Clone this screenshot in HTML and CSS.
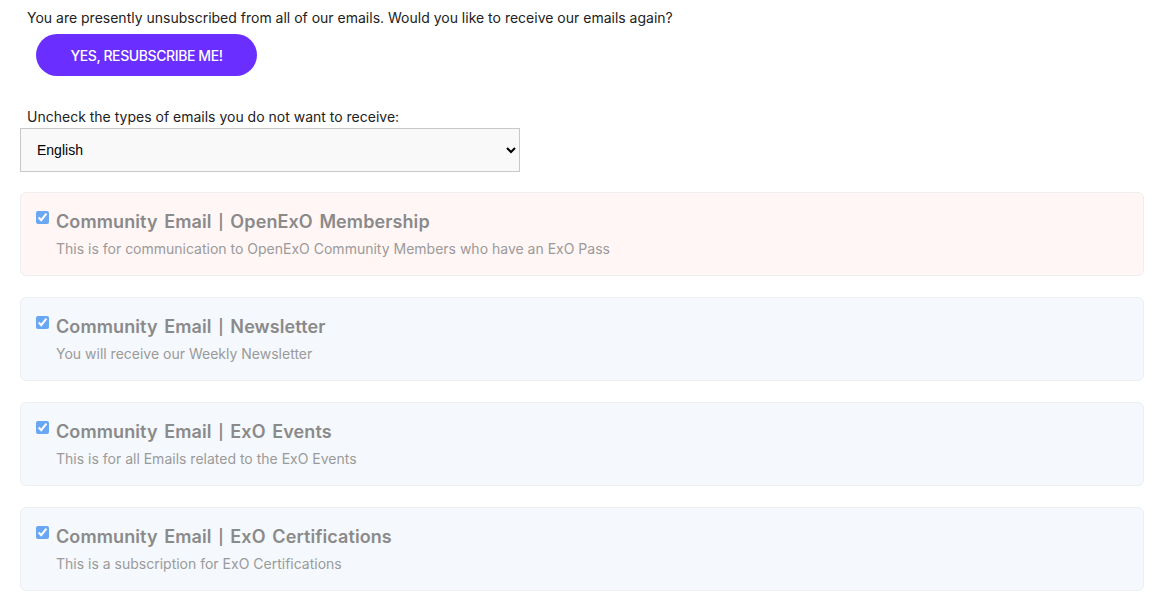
FILE: index.html
```html
<!DOCTYPE html>
<html>
<head>
<meta charset="utf-8">
<link rel="stylesheet" href="styles.css">
</head>
<body>
<div class="page">
  <p class="intro">You are presently unsubscribed from all of our emails. Would you like to receive our emails again?</p>
  <div class="btn-row"><button class="resub">YES, RESUBSCRIBE ME!</button></div>
  <p class="label">Uncheck the types of emails you do not want to receive:</p>
  <select class="lang"><option>English</option></select>
  <div class="cards">
    <div class="card pink">
      <input type="checkbox" checked>
      <div class="text">
        <div class="title">Community Email <span class="pipe">|</span> OpenExO Membership</div>
        <div class="desc">This is for communication to OpenExO Community Members who have an ExO Pass</div>
      </div>
    </div>
    <div class="card">
      <input type="checkbox" checked>
      <div class="text">
        <div class="title">Community Email <span class="pipe">|</span> Newsletter</div>
        <div class="desc">You will receive our Weekly Newsletter</div>
      </div>
    </div>
    <div class="card">
      <input type="checkbox" checked>
      <div class="text">
        <div class="title">Community Email <span class="pipe">|</span> ExO Events</div>
        <div class="desc">This is for all Emails related to the ExO Events</div>
      </div>
    </div>
    <div class="card">
      <input type="checkbox" checked>
      <div class="text">
        <div class="title">Community Email <span class="pipe">|</span> ExO Certifications</div>
        <div class="desc">This is a subscription for ExO Certifications</div>
      </div>
    </div>
  </div>
</div>
</body>
</html>
```
FILE: styles.css
```css
html, body { margin: 0; padding: 0; background: #fff; }
body { font-family: Inter, "Noto Sans", sans-serif; color: #222; }
.page { padding: 9px 19px 0 20px; }
.intro { margin: 0 0 0 7px; font-size: 14px; line-height: 18px; color: #222; }
.btn-row { padding: 7px 0 0 16px; }
.resub {
  width: 221px; height: 42px; border: none; border-radius: 21px;
  background: #6a2eff; color: #fff; font-family: Inter, sans-serif;
  font-size: 14px; letter-spacing: -0.4px; font-weight: 500; cursor: pointer;
}
.label { margin: 32px 0 2px 7px; font-size: 14px; line-height: 18px; color: #222; }
.lang {
  display: block; width: 500px; height: 44px; padding: 0 12px;
  background: #f9f9f9; border: 1px solid #c8c8c8; border-radius: 0;
  font-family: "Liberation Sans", Arial, sans-serif; font-size: 14px; color: #000;
}
.cards { display: flex; flex-direction: column; gap: 21px; margin-top: 20px; }
.card {
  display: flex; align-items: flex-start; gap: 7px;
  height: 84px; box-sizing: border-box; padding: 18px 15px 0;
  background: #f5f8fc; border: 1px solid #eceef0; border-radius: 6px;
}
.card.pink { background: #fff6f5; }
.card input { margin: 0; width: 13px; height: 13px; accent-color: #2f86f0; opacity: 0.7; }
.title { font-size: 18px; font-weight: 600; color: #8a8a8a; line-height: 22px; word-spacing: 2px; letter-spacing: 0.1px; }
.pipe { font-size: 15px; position: relative; top: -1px; }
.desc { margin-top: 6px; font-size: 14px; color: #9a9a9a; line-height: 18px; }
```
